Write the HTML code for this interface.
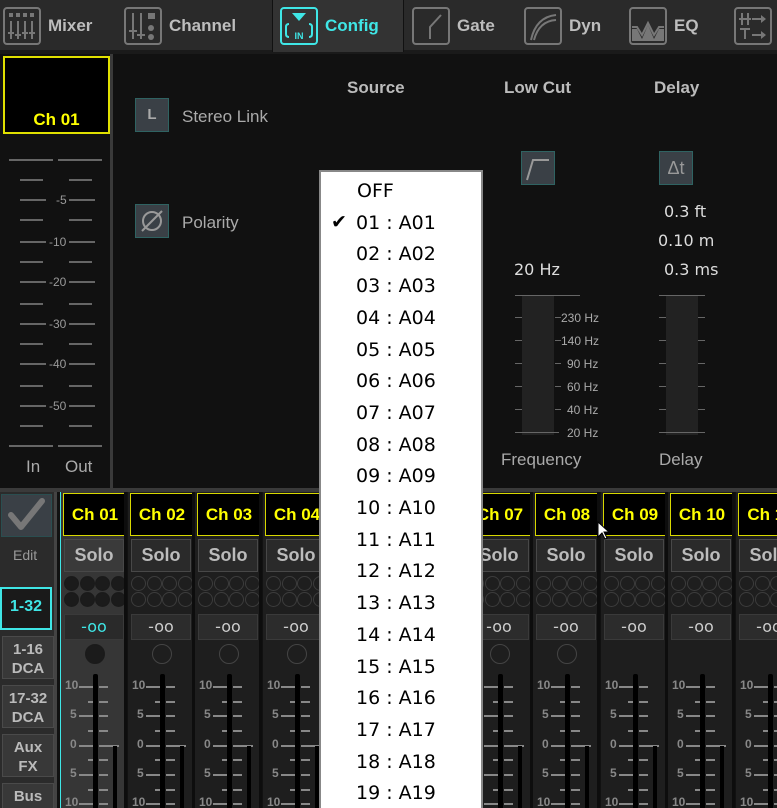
<!DOCTYPE html>
<html><head><meta charset="utf-8"><style>
*{margin:0;padding:0;box-sizing:border-box}
html{width:777px;height:808px;overflow:hidden}
body{width:777px;height:808px;overflow:hidden;background:#111;font-family:"Liberation Sans",sans-serif;position:relative}
.a{position:absolute}
.tab{position:absolute;top:0;height:50px;color:#bdbdbd;font-weight:bold;font-size:17px}
.tab svg{position:absolute;top:7px;left:0}
.tab span{position:absolute;top:16px}
.ic{position:absolute;width:34px;height:34px;background:#3a4046;border:1px solid #2f6362;color:#aaa;font-weight:bold;font-size:15px;text-align:center;line-height:32px}
.lbl{color:#aaa;font-size:17px;position:absolute}
.hd{color:#bbb;font-weight:bold;font-size:17px;position:absolute}
.tk{position:absolute;height:2px;background:#666}
.sl{position:absolute;color:#999;font-size:12px}
.val{position:absolute;color:#ddd;font-size:16px;font-family:"DejaVu Sans",sans-serif}
.dd{position:absolute;left:319px;top:170px;width:164px;height:638px;background:#fff;border:2px solid #888;border-bottom:none;overflow:hidden}
.dd div{position:absolute;left:35px;font-family:"DejaVu Sans",sans-serif;font-size:19px;color:#000}
.strip{position:absolute;top:0;height:316px;width:67px;background:#1e1e1e;border-right:3px solid #0d0d0d;overflow:hidden}
.nm{position:absolute;left:2px;top:1px;width:64px;height:43px;background:#000;border:1px solid #d8d800;color:#ff0;font-weight:bold;font-size:17px;text-align:center;line-height:41px}
.solo{position:absolute;left:3px;top:47px;width:60px;height:33px;background:#2a2a2a;border:1px solid #484848;color:#bbb;font-weight:bold;font-size:18px;text-align:center;line-height:31px}
.dot{position:absolute;width:15px;height:15px;border-radius:50%;border:1px solid #3c3c3c}
.inf{position:absolute;left:3px;top:122px;width:60px;height:26px;background:#2c2c2c;border:1px solid #3a3a3a;color:#ccc;font-size:16px;text-align:center;line-height:24px;font-family:"DejaVu Sans",sans-serif}
.lb{position:absolute;left:2px;width:52px;height:43px;background:#383838;border:1px solid #4a4a4a;color:#bbb;font-weight:bold;font-size:15px;text-align:center;line-height:19px;padding-top:3px}
</style></head><body>
<div class="a" style="left:0;top:0;width:777px;height:51px;background:#2a2a2a"></div>
<div class="a" style="left:0;top:50px;width:777px;height:4px;background:#1a1a1a"></div>
<div class="a" style="left:272px;top:0;width:131px;height:52px;background:#333;border-left:1px solid #111"></div>
<div class="tab" style="left:3px"><svg width="38" height="38"><rect x="1" y="1" width="36" height="36" rx="3" fill="none" stroke="#777" stroke-width="2"/><g fill="#777"><rect x="6" y="6" width="4" height="4"/><rect x="13" y="6" width="4" height="4"/><rect x="20" y="6" width="4" height="4"/><rect x="27" y="6" width="4" height="4"/></g><g stroke="#777" stroke-width="2"><path d="M8 14v18M15 14v18M22 14v18M29 14v18M5 26h6M12 28h6M19 26h6M26 26h6"/></g></svg><span style="left:45px">Mixer</span></div>
<div class="tab" style="left:124px"><svg width="38" height="38"><rect x="1" y="1" width="36" height="36" rx="3" fill="none" stroke="#777" stroke-width="2"/><g stroke="#777" stroke-width="2"><path d="M9 6v26M17 6v26M5 24h8M13 28h8"/></g><rect x="24" y="6" width="7" height="6" fill="#777"/><circle cx="27" cy="21" r="3" fill="#777"/><circle cx="27" cy="30" r="3" fill="#777"/></svg><span style="left:45px">Channel</span></div>
<div class="tab" style="left:280px;color:#3fe6e6"><svg width="38" height="38"><rect x="1" y="1" width="36" height="36" rx="3" fill="none" stroke="#3fe6e6" stroke-width="2"/><path d="M12 6h14l-7 8z" fill="#3fe6e6"/><path d="M9 17q-3 0-3 3v7q0 3 3 3M29 17q3 0 3 3v7q0 3-3 3" fill="none" stroke="#3fe6e6" stroke-width="2"/><text x="19" y="32" font-size="9" text-anchor="middle" fill="#3fe6e6" font-family="Liberation Sans" font-weight="bold">IN</text></svg><span style="left:45px">Config</span></div>
<div class="a" style="left:403px;top:0;width:1px;height:52px;background:#111"></div>
<div class="tab" style="left:412px"><svg width="38" height="38"><rect x="1" y="1" width="36" height="36" rx="3" fill="none" stroke="#777" stroke-width="2"/><path d="M18 32V20L29 8" fill="none" stroke="#777" stroke-width="2"/></svg><span style="left:45px">Gate</span></div>
<div class="tab" style="left:524px"><svg width="38" height="38"><rect x="1" y="1" width="36" height="36" rx="3" fill="none" stroke="#777" stroke-width="2"/><path d="M7 33Q12 10 32 8M10 33Q15 14 32 13" fill="none" stroke="#777" stroke-width="2"/></svg><span style="left:45px">Dyn</span></div>
<div class="tab" style="left:629px"><svg width="38" height="38"><rect x="1" y="1" width="36" height="36" rx="3" fill="none" stroke="#777" stroke-width="2"/><path d="M3 22h5l5 10 6-14 6 14 5-10h5v12H3z" fill="#777"/><path d="M3 20h5l5 8 6-12 6 12 5-8h5" fill="none" stroke="#777" stroke-width="2"/></svg><span style="left:45px">EQ</span></div>
<div class="tab" style="left:734px"><svg width="38" height="38"><rect x="1" y="1" width="36" height="36" rx="3" fill="none" stroke="#777" stroke-width="2"/><g stroke="#777" stroke-width="2" fill="none"><path d="M8 6v12M14 6v12M5 12h12M18 12h10M6 22h10M11 22v10M18 28h10"/></g><path d="M27 8l5 4-5 4zM27 24l5 4-5 4z" fill="#777"/></svg></div>

<div class="a" style="left:0;top:54px;width:113px;height:434px;background:#111;border-right:3px solid #3a3a3a"></div>
<div class="a" style="left:3px;top:56px;width:107px;height:78px;background:#000;border:2px solid #e0e000;color:#ff0;font-weight:bold;font-size:17px;text-align:center;padding-top:53px;line-height:18px">Ch 01</div>
<div id="meter"></div>
<div class="lbl" style="left:26px;top:457px;font-size:17px">In</div>
<div class="lbl" style="left:65px;top:457px;font-size:17px">Out</div>

<div class="hd" style="left:347px;top:78px">Source</div>
<div class="hd" style="left:504px;top:78px">Low Cut</div>
<div class="hd" style="left:654px;top:78px">Delay</div>
<div class="ic" style="left:135px;top:98px">L</div>
<div class="lbl" style="left:182px;top:107px">Stereo Link</div>
<div class="ic" style="left:135px;top:204px"><svg width="32" height="32"><circle cx="16" cy="16" r="9" fill="none" stroke="#999" stroke-width="2"/><path d="M6 26L26 6" stroke="#999" stroke-width="2"/></svg></div>
<div class="lbl" style="left:182px;top:213px">Polarity</div>
<div class="ic" style="left:521px;top:151px"><svg width="32" height="32"><path d="M5 28L11 8h16" fill="none" stroke="#999" stroke-width="2"/></svg></div>
<div class="ic" style="left:659px;top:151px;font-weight:normal;font-size:18px;color:#999">Δt</div>
<div class="val" style="left:664px;top:202px">0.3 ft</div>
<div class="val" style="left:658px;top:231px">0.10 m</div>
<div class="val" style="left:664px;top:260px">0.3 ms</div>
<div class="val" style="left:514px;top:260px">20 Hz</div>
<div class="a" style="left:522px;top:295px;width:32px;height:140px;background:#222"></div>
<div class="a" style="left:666px;top:295px;width:32px;height:140px;background:#222"></div>
<div id="lc"></div>
<div class="lbl" style="left:501px;top:450px">Frequency</div>
<div class="lbl" style="left:659px;top:450px">Delay</div>

<div class="a" style="left:0;top:488px;width:777px;height:4px;background:#3a3a3a"></div>
<div class="a" style="left:0;top:492px;width:57px;height:316px;background:#2b2b2b;border-right:3px solid #444;overflow:hidden">
<div class="a" style="left:1px;top:2px;width:51px;height:43px;background:#3a4046;border:1px solid #2a4e50"><svg width="49" height="41"><path d="M9 20l10 12L40 6" fill="none" stroke="#777" stroke-width="6" stroke-linecap="round" stroke-linejoin="round"/></svg></div>
<div class="a" style="left:13px;top:55px;color:#999;font-size:14px">Edit</div>
<div class="lb" style="left:0;top:95px;background:#1a1a1a;border:2px solid #3fe6e6;color:#3fe6e6;font-size:16px;line-height:36px;padding-top:0">1-32</div>
<div class="lb" style="top:144px">1-16<br>DCA</div>
<div class="lb" style="top:193px">17-32<br>DCA</div>
<div class="lb" style="top:242px">Aux<br>FX</div>
<div class="lb" style="top:291px">Bus</div>
</div>
<div class="a" id="strips" style="left:0;top:492px;width:777px;height:316px;overflow:hidden"></div>

<div class="dd">
<div style="top:8px;left:36px">OFF</div>
<div id="ddi"></div>
</div>
<svg class="a" style="left:597px;top:521px" width="12" height="20"><path d="M1 1v15l4-4 3 6 2-1-3-6h5z" fill="#fff" stroke="#000"/></svg>

<script>
var h='';
var ys=[160,180,200,220,242,262,282,304,324,344,364,386,406,426,446];
var labs={200:'-5',242:'-10',282:'-20',324:'-30',364:'-40',406:'-50'};
ys.forEach(function(y,i){
 if(i==0||i==14){h+='<div class="tk" style="left:9px;top:'+(y-1)+'px;width:44px"></div><div class="tk" style="left:58px;top:'+(y-1)+'px;width:44px"></div>';}
 else{var l=labs[y];var w=l?26:23;h+='<div class="tk" style="left:20px;top:'+(y-1)+'px;width:'+w+'px"></div><div class="tk" style="left:69px;top:'+(y-1)+'px;width:'+w+'px"></div>';
 if(l)h+='<div class="sl" style="left:'+(l.length>2?49:56)+'px;top:'+(y-7)+'px">'+l+'</div>';}
});
document.getElementById('meter').innerHTML=h;
h='';
var ly=[296,318,341,364,387,410,433];var ll=['','230 Hz','140 Hz','90 Hz','60 Hz','40 Hz','20 Hz'];
ly.forEach(function(y,i){
 var e=(i==0||i==6);
 h+='<div class="tk" style="left:515px;top:'+(y-1)+'px;width:'+(e?44:7)+'px;height:1px"></div>';
 h+='<div class="tk" style="left:555px;top:'+(y-1)+'px;width:'+(e?(i==0?25:0):6)+'px;height:1px"></div>';
 if(ll[i])h+='<div class="sl" style="left:'+(ll[i].length>5?561:567)+'px;top:'+(y-7)+'px;color:#aaa">'+ll[i]+'</div>';
 h+='<div class="tk" style="left:659px;top:'+(y-1)+'px;width:'+(e?46:7)+'px;height:1px"></div><div class="tk" style="left:698px;top:'+(y-1)+'px;width:7px;height:1px"></div>';
});
document.getElementById('lc').innerHTML=h;
h='';
for(var i=0;i<11;i++){
 var x=Math.round(60+i*67.6);var n=(i<9?'0':'')+(i+1);var act=i==0;
 h+='<div class="strip" style="left:'+x+'px;'+(act?'background:#363636;border-left:1px solid #3fe6e6;':'')+'">';
 h+='<div class="nm">Ch '+n+'</div><div class="solo"'+(act?' style="background:#3a3a3a"':'')+'>Solo</div>';
 for(var r=0;r<2;r++)for(var c=0;c<4;c++)h+='<div class="dot" style="left:'+(3+c*15.5)+'px;top:'+(84+r*16)+'px;'+(act?'background:#1b1b1b;border-color:#1b1b1b':'')+'"></div>';
 h+='<div class="inf"'+(act?' style="color:#3fe6e6;background:#2a2a2a"':'')+'>-oo</div>';
 if(i<8)h+='<div class="dot" style="left:24px;top:152px;width:20px;height:20px;'+(act?'background:#1b1b1b;border-color:#1b1b1b':'border-color:#444')+'"></div>';
 var fy=[194,209,223,238,253,267,282,297,311];var fl={0:'10',2:'5',4:'0',6:'5',8:'10'};
 fy.forEach(function(y,k){
  if(fl[k]!==undefined)h+='<div class="sl" style="left:'+(fl[k].length>1?4:9)+'px;top:'+(y-8)+'px;font-weight:bold;color:#888">'+fl[k]+'</div><div class="tk" style="left:18px;top:'+y+'px;width:9px;background:#888"></div>';
  h+='<div class="tk" style="left:27px;top:'+y+'px;width:9px;background:#888"></div><div class="tk" style="left:38px;top:'+y+'px;width:'+(k==4?20:9)+'px;background:#888"></div>';
 });
 h+='<div class="a" style="left:32px;top:182px;width:5px;height:140px;background:#000;border-radius:2px"></div>';
 h+='<div class="a" style="left:52px;top:254px;width:4px;height:70px;background:#000"></div>';
 h+='</div>';
}
document.getElementById('strips').innerHTML=h;
h='';
for(var j=1;j<=19;j++){var s=(j<10?'0':'')+j;h+='<div style="top:'+(8+j*31.7)+'px;left:35px">'+s+' : A'+s+'</div>';}
h+='<div style="top:39px;left:10px;font-weight:bold">✔</div>';
document.getElementById('ddi').outerHTML=h;
</script>
</body></html>
